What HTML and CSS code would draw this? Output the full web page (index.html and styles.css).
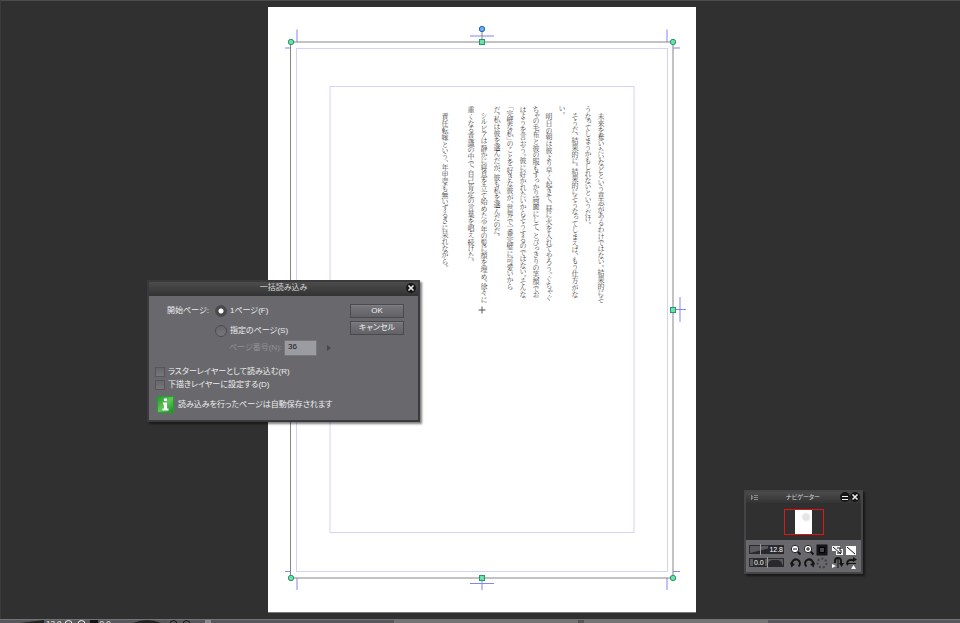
FILE: index.html
```html
<!DOCTYPE html>
<html lang="ja">
<head>
<meta charset="utf-8">
<meta name="viewport" content="width=device-width, initial-scale=1">
<title>一括読み込み</title>
<link rel="stylesheet" href="styles.css">
</head>
<body>
<main class="workspace">
  <article class="page">
    <svg class="guides" viewBox="0 0 428 605" aria-hidden="true">
      <g class="frame">
        <rect x="28.500" y="41.500" width="371" height="523"/>
        <rect x="62" y="79.500" width="304" height="446"/>
      </g>
      <g class="crop">
        <path d="M29 22.500V35M17 41H23M399 22.500V35M405 41H412M202 29H226M17 564.500H23M29 571V583M399 571V583M405 564.500H412M202 576.500H226M214 571V583M412 290V315M405 302.500H418"/>
      </g>
      <path class="bounds" d="M22.500 35H405V571H22.500ZM214 22V35"/>
      <g class="handle">
        <circle cx="23" cy="35" r="2.700"/><circle cx="405" cy="35" r="2.700"/>
        <circle cx="23" cy="571" r="2.700"/><circle cx="405" cy="571" r="2.700"/>
        <rect x="211.500" y="32.500" width="5" height="5"/><rect x="211.500" y="568.500" width="5" height="5"/>
        <rect x="402.500" y="300.500" width="5" height="5"/>
      </g>
      <circle class="pivot" cx="214" cy="22" r="2.700"/>
      <path class="centre" d="M214 299.500V306.500M210.500 303H217.500"/>
    </svg>
    <div class="story">
      <p>　未来を奪いたいなどという意志があるわけではない。結果的にそ<br>うなってしまうかもしれないというだけ。</p>
      <p>　そうだ、結果的に。結果的にそうなってしまえば、もう仕方がな<br>い。</p>
      <p>　明日の朝は彼より早く起きて、昼に火を入れてやろう。ぐちゃぐ<br>ちゃの毛布と彼の服もすっかり綺麗にして、とびっきりの笑顔でお<br>はようを言おう。彼に好かれたいからそうするのではない。そんな<br>「完璧な私」のことを好きな彼が、世界で一番完璧に可愛いから<br>だ。私は彼を選んだが、彼も私を選んだのだ。</p>
      <p>　シルビアは静かに寝息を立て始めた少年の髪に顔を埋め、徐々に<br>重くなる意識の中で、自己肯定の言葉を唱え続けた。</p>
      <p><br>　責任転嫁という、年甲斐も無いずるさに呆れながら。</p>
    </div>
  </article>
</main>

<footer class="statusbar">
  <div class="quick">
    <svg class="wedge" viewBox="0 0 32 4" aria-hidden="true"><path d="M0 4L32 0V4Z"/></svg>
    <span>12.8</span>
    <svg class="rings" viewBox="0 0 24 4" aria-hidden="true"><path d="M1 4a3.500 3.500 0 0 1 7 0M14 4a3.500 3.500 0 0 1 7 0"/></svg>
    <i class="chip"></i>
    <span>0.0</span>
    <svg class="dial" viewBox="0 0 32 4" aria-hidden="true"><path d="M0 4Q16-4 32 4Z"/></svg>
    <svg class="rings dark" viewBox="0 0 24 4" aria-hidden="true"><path d="M1 4a3.500 3.500 0 0 1 7 0M14 4a3.500 3.500 0 0 1 7 0"/></svg>
    <i class="end"></i>
  </div>
  <div class="scroll"><i></i></div>
</footer>

<form class="window dialog">
  <header class="titlebar">
    <h1>一括読み込み</h1>
    <button type="button" class="close" aria-label="閉じる"><svg viewBox="0 0 10 10"><circle cx="5" cy="5" r="5"/><path d="M2.500 2.500L7.500 7.500M7.500 2.500L2.500 7.500"/></svg></button>
  </header>
  <div class="content">
    <div class="top">
      <fieldset class="start">
        <legend>開始ページ:</legend>
        <label class="choice"><input type="radio" name="start" checked>1ページ(F)</label>
        <label class="choice"><input type="radio" name="start">指定のページ(S)</label>
        <div class="number">
          <label for="num">ページ番号(N):</label>
          <input id="num" type="text" value="36" disabled>
          <button type="button" class="more" aria-label="数値" disabled></button>
        </div>
      </fieldset>
      <div class="actions">
        <button type="submit">OK</button>
        <button type="button">キャンセル</button>
      </div>
    </div>
    <div class="options">
      <label class="choice"><input type="checkbox">ラスターレイヤーとして読み込む(R)</label>
      <label class="choice"><input type="checkbox">下描きレイヤーに設定する(D)</label>
    </div>
    <p class="note">
      <svg viewBox="0 0 17 17" aria-hidden="true"><defs><linearGradient id="g" x2="1" y2="1"><stop stop-color="#24932d"/><stop offset=".5" stop-color="#62c45c"/><stop offset="1" stop-color="#168a20"/></linearGradient></defs><rect x=".5" y=".5" width="16" height="16" rx="1" fill="url(#g)" stroke="#20a32b"/><path d="M7 2.500h3v2.500h-3zM6 6.500h4v6h1.500v2h-6v-2H7V8.500H6z" fill="#fff"/></svg>
      <span>読み込みを行ったページは自動保存されます</span>
    </p>
  </div>
</form>

<section class="window navigator" aria-label="ナビゲーター">
  <header class="titlebar">
    <svg class="menu" viewBox="0 0 7 7" aria-hidden="true"><path d="M.5 1V6M3 1.500H7M3 3.500H7M3 5.500H7M1 2L2 3.500L1 5"/></svg>
    <h2>ナビゲーター</h2>
    <button type="button" class="close" aria-label="最小化"><svg viewBox="0 0 10 10"><circle cx="5" cy="5" r="5"/><path class="thin" d="M2 4.500H8M2 7.500H8"/></svg></button>
    <button type="button" class="close" aria-label="閉じる"><svg viewBox="0 0 10 10"><circle cx="5" cy="5" r="5"/><path d="M2.500 2.500L7.500 7.500M7.500 2.500L2.500 7.500"/></svg></button>
  </header>
  <div class="preview"><div class="view"><div class="thumb"></div></div></div>
  <div class="tools">
    <div class="meter">
      <svg viewBox="0 0 35 11" aria-hidden="true"><rect x=".5" y="1.500" width="34" height="8"/><path d="M1 9L21 4V9Z"/><path class="knob" d="M11.500 0V11"/></svg>
      <output>12.8</output>
    </div>
    <button type="button" aria-label="縮小"><svg viewBox="0 0 12 12"><path class="k" d="M7 7L10.500 10.500"/><circle class="lens" cx="5" cy="5" r="3.700"/><path class="mark" d="M3 5H7"/></svg></button>
    <button type="button" aria-label="拡大"><svg viewBox="0 0 12 12"><path class="k" d="M7 7L10.500 10.500"/><circle class="lens" cx="5" cy="5" r="3.700"/><path class="mark" d="M3 5H7M5 3V7"/></svg></button>
    <button type="button" aria-label="全体表示"><svg viewBox="0 0 12 12"><path fill="#151517" d="M.5 .5h11v11H.5z"/><path fill="#48484b" stroke="#000" d="M3.500 3.500h5v5h-5z"/></svg></button>
    <button type="button" class="gap" aria-label="フィット"><svg viewBox="0 0 12 12"><path fill="#f5f5f5" d="M0 2h8v5H0zM4 5h7v6H4z"/><path class="mark" d="M1 3L9 10M5 4H8V7M5 9H9V6"/></svg></button>
    <button type="button" aria-label="全画面"><svg viewBox="0 0 12 12"><path fill="#fff" d="M1 2h10v9H1z"/><path class="mark" d="M2 3L10 10"/></svg></button>
    <div class="meter left">
      <svg viewBox="0 0 35 11" aria-hidden="true"><rect x=".5" y="1.500" width="34" height="8"/><path d="M18 9Q20 3 23 3H29Q32 3 34 9Z"/><path class="knob" d="M18.500 0V11"/></svg>
      <output>0.0</output>
    </div>
    <button type="button" aria-label="左回転"><svg viewBox="0 0 12 12"><path class="k" d="M2 7A4 4 0 1 1 8.500 9.500"/><path d="M0 5.500L5 7L1.500 10.500Z"/></svg></button>
    <button type="button" aria-label="右回転"><svg viewBox="0 0 12 12"><path class="k" d="M10 7A4 4 0 1 0 3.500 9.500"/><path d="M12 5.500L7 7L10.500 10.500Z"/></svg></button>
    <button type="button" aria-label="回転をリセット"><svg viewBox="0 0 12 12"><circle class="dots" cx="6" cy="6" r="4.500"/></svg></button>
    <button type="button" class="gap" aria-label="左右反転"><svg viewBox="0 0 12 12"><path class="k" d="M3 6V4A3 3 0 0 1 9 4V7"/><path d="M5.500 2h1v9h-1zM7 6H12L9.500 10Z"/><path fill="#fff" d="M0 7L4 9L0 11Z"/></svg></button>
    <button type="button" aria-label="上下反転"><svg viewBox="0 0 12 12"><path class="k" d="M8 3H5A3 3 0 0 0 3 8"/><path d="M1 6h10v1H1zM8 0V5L12 2.500Z"/><path fill="#fff" d="M6 12L8.500 8L11 12Z"/></svg></button>
  </div>
</section>
</body>
</html>
```
FILE: styles.css
```css
* { box-sizing: border-box; }

body {
  margin: 0;
  height: 100vh;
  display: flex;
  flex-direction: column;
  overflow: hidden;
  position: relative;
  background: #303030;
  color: #ededed;
  font: 8px/12px "Liberation Sans", "Noto Sans CJK JP", sans-serif;
  font-feature-settings: "palt";
}

h1, h2, p, fieldset, legend { margin: 0; padding: 0; border: 0; font-size: inherit; font-weight: 400; }
button, input { font: inherit; color: inherit; margin: 0; padding: 0; }
svg { display: block; overflow: visible; }

/* Canvas */
.workspace {
  flex: 1;
  min-height: 0;
  display: flex;
  justify-content: center;
  padding: 6px 0 7px 3px;
  border-top: 1px solid #4a4d4d;
  border-left: 1px solid #3b3b3b;
}
.page { position: relative; height: 100%; aspect-ratio: 428 / 605; background: #fff; box-shadow: 0 1px 0 #777; }
.guides { width: 100%; height: 100%; fill: none; }
.frame { stroke: #d3d3fa; }
.crop { stroke: #8585f4; }
.bounds { stroke: #858585; }
.handle { fill: #68e3ab; stroke: #2e946c; }
.pivot { fill: #69b0f5; stroke: #2b64ac; }
.centre { stroke: #555; }
.story {
  position: absolute;
  top: 99px;
  right: 89px;
  writing-mode: vertical-rl;
  white-space: nowrap;
  color: #444;
  font: 7px/13px "Noto Serif CJK JP", "Noto Sans CJK JP", serif;
  font-weight: 300;
  font-feature-settings: "vpal";
}

/* Bottom strip */
.statusbar { display: flex; height: 4px; overflow: hidden; background: #58585c; border-top: 1px solid #737377; }
.quick { flex: 0 0 41%; display: flex; gap: 2px; padding-left: 12px; line-height: 8px; }
.quick svg { height: 4px; flex: none; }
.wedge, .dial { width: 32px; fill: #222; }
.dial { margin-left: 18px; }
.rings { width: 24px; fill: none; stroke: #eee; }
.rings.dark { margin-left: 4px; stroke: #151515; }
.chip { width: 8px; background: #151515; }
.end { width: 6px; margin-left: 10px; background: #8a8a8e; }
.scroll { flex: 0 0 39%; background: #747474; display: flex; justify-content: center; }
.scroll i { width: 6px; background: #555; }

/* Floating windows */
.window { position: absolute; border: 2px solid #3a3a3c; background: #69696d; box-shadow: 2px 2px 2px rgb(0 0 0 / 50%); }
.titlebar { display: flex; align-items: center; background: linear-gradient(#4c4c4c, #333); color: #d8d8d8; text-align: center; }
.titlebar h1, .titlebar h2 { flex: 1; }
.close { width: 10px; height: 10px; border: 0; background: none; }
.close svg { fill: #161616; stroke: none; }
.close path { stroke: #eee; stroke-width: 1.5; }
.close .thin { stroke-width: 1; }

.dialog { left: 147px; top: 280px; width: 273px; }
.dialog .titlebar { height: 14px; padding: 0 2px 2px 12px; }
.content { padding: 8px 14px 7px 6px; }
.top { display: flex; justify-content: space-between; align-items: flex-start; }
.start { display: grid; grid-template-columns: 48px auto; padding-left: 12px; }
.start legend { float: left; grid-row: 1; line-height: 14px; }
.start .choice { grid-column: 2; height: 14px; line-height: 14px; }
.start .choice + .choice { margin-top: 6px; }
.choice { display: flex; align-items: center; gap: 3px; }
.choice input { appearance: none; flex: none; width: 10px; height: 10px; border: 1px solid #55555a; background: linear-gradient(#66666b, #77777b); }
.choice input[type="radio"] { width: 12px; height: 12px; border-color: #4c4c50; border-radius: 50%; }
.choice input[type="radio"]:checked { background: radial-gradient(#fff 0 2px, #49494c 3px); }
.number { grid-column: 2; display: flex; align-items: center; margin-top: 2px; padding-left: 14px; color: #929296; }
.number label { width: 55px; }
.number input { width: 33px; height: 16px; padding: 0 3px 3px; border: 1px solid #77777b; background: #9a9ca2; color: #151515; }
.more { margin-left: 10px; border: solid transparent; border-width: 3px 0 3px 4px; border-left-color: #48484b; background: none; }
.actions { width: 54px; display: grid; gap: 3px; }
.actions button { height: 14px; line-height: 12px; border: 1px solid #4a4a4e; background: linear-gradient(#77777b, #626266); box-shadow: inset 0 1px #818185; }
.options { margin-top: 9px; line-height: 13px; }
.options .choice { height: 13px; }
.note { display: flex; align-items: center; gap: 4px; margin-top: 5px; padding-left: 2px; }
.note svg { width: 17px; height: 17px; }

.navigator { left: 744px; top: 490px; width: 119px; border-color: #454548; font-size: 6px; }
.navigator .titlebar { height: 11px; padding: 0 1px 1px 5px; }
.navigator h2 { padding-left: 8px; }
.menu { width: 7px; height: 7px; fill: none; stroke: #888; }
.preview { height: 37px; display: grid; place-items: center; background: #303030; }
.view { width: 40px; height: 26px; border: 1px solid #e01515; }
.thumb { width: 17px; height: 24px; margin: 0 auto; background: radial-gradient(circle at 11px 7px, #e4e4e4 0 3px, #fff 5px); }
.tools { display: grid; grid-template-columns: 40px repeat(3, 12px) 15px 12px; column-gap: 1px; padding: 3px; justify-content: start; }
.tools button { width: 12px; height: 13px; border: 0; background: none; }
.tools button.gap { margin-left: 3px; }
.tools button svg { width: 12px; height: 12px; fill: #151515; }
.tools .k { fill: none; stroke: #151515; stroke-width: 2; }
.tools .lens { fill: #fff; stroke: #222; }
.tools .mark { fill: none; stroke: #151515; }
.tools .dots { fill: none; stroke: #424245; stroke-width: 2; stroke-dasharray: 2 2; }
.meter { display: grid; align-items: center; justify-content: start; }
.meter > * { grid-area: 1 / 1; }
.meter svg { width: 35px; height: 11px; fill: #29292b; }
.meter rect { fill: #5a5a5e; stroke: #2b2b2d; }
.meter .knob { stroke: #99999c; }
.meter output { justify-self: end; padding: 0 1px; font: 7px/8px "Liberation Sans", sans-serif; background: #29292b; color: #fff; }
.meter.left output { justify-self: start; margin-left: 4px; }
```
